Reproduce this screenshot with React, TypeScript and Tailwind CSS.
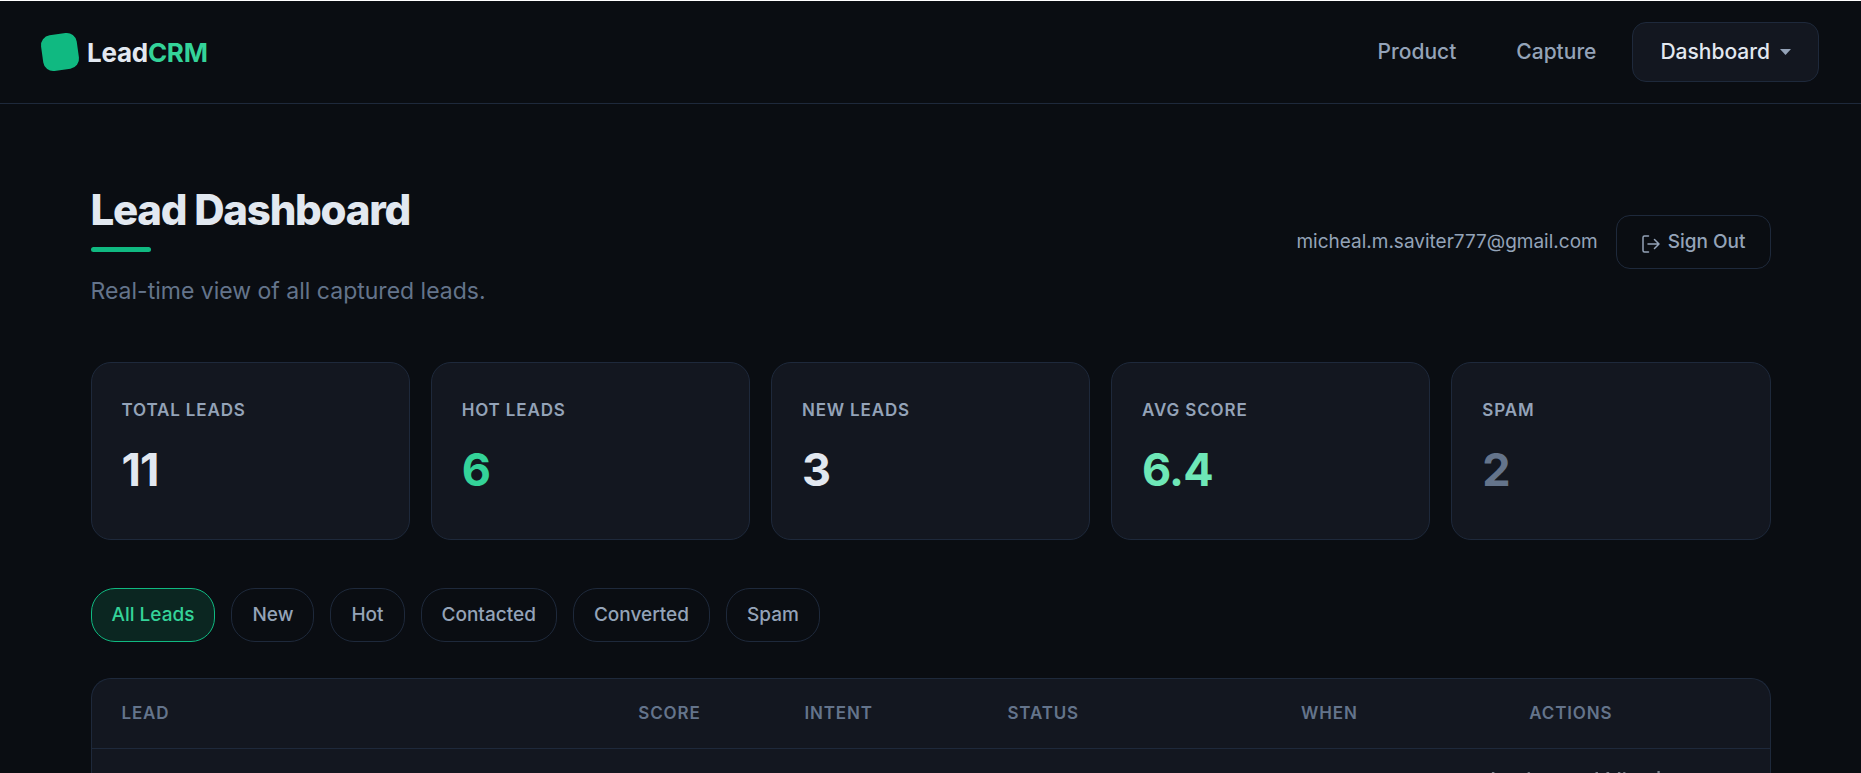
import { useState } from "react";

const STATS = [
  { label: "Total Leads", value: "11", color: "text-[#e2e8f0]" },
  { label: "Hot Leads", value: "6", color: "text-[#34d399]" },
  { label: "New Leads", value: "3", color: "text-[#e2e8f0]" },
  { label: "Avg Score", value: "6.4", color: "text-[#6ee7b7]" },
  { label: "Spam", value: "2", color: "text-[#64748b]" },
];

const FILTERS = ["All Leads", "New", "Hot", "Contacted", "Converted", "Spam"];

const COLUMNS = [
  { label: "Lead", width: "w-[30.8%]" },
  { label: "Score", width: "w-[9.9%]" },
  { label: "Intent", width: "w-[12.1%]" },
  { label: "Status", width: "w-[17.5%]" },
  { label: "When", width: "w-[13.6%]" },
  { label: "Actions", width: "w-[16.1%]" },
];

function SignOutIcon() {
  return (
    <svg className="mt-1 size-[18px]" viewBox="0 0 18 18" fill="none" stroke="currentColor" strokeWidth="1.5" strokeLinecap="round" strokeLinejoin="round" aria-hidden="true">
      <path d="M6.500 1H2.500A1.500 1.500 0 0 0 1 2.500v13A1.500 1.500 0 0 0 2.500 17H6.500" />
      <path d="M6 9h11M12.500 4.500 17 9l-4.500 4.500" />
    </svg>
  );
}

function Header() {
  return (
    <header className="flex items-center justify-between border-t border-b border-t-white border-b-[#1e293b] px-[42px] py-[21px]">
      <a href="#" className="flex items-center gap-[9px] text-[26px] font-bold tracking-[-0.01em] text-[#e2e8f0]">
        <span className="size-9 -rotate-8 rounded-[10px] bg-[#10b981]" />
        <span>
          Lead<span className="text-[#34d399]">CRM</span>
        </span>
      </a>
      <nav className="flex items-center gap-3 text-[21px] font-medium text-[#94a3b8]">
        <a href="#" className="px-6">Product</a>
        <a href="#" className="px-6">Capture</a>
        <button type="button" className="flex h-[60px] items-center gap-2.5 rounded-[14px] border border-[#1e293b] bg-[#131720] px-[27px] text-[#e2e8f0]">
          Dashboard
          <svg className="h-1.5 w-[11px] text-[#94a3b8]" viewBox="0 0 11 6" fill="currentColor" aria-hidden="true">
            <path d="M0 0h11L5.500 6z" />
          </svg>
        </button>
      </nav>
    </header>
  );
}

function PageTitle() {
  return (
    <div className="flex items-center justify-between">
      <div>
        <h1 className="text-[42px] leading-[52px] font-extrabold tracking-[-0.03em] text-[#e2e8f0]">Lead Dashboard</h1>
        <div className="mt-[11px] h-[5px] w-[60px] rounded-full bg-[#10b981]" />
        <p className="mt-[21px] text-[23px] leading-9 text-[#64748b]">Real-time view of all captured leads.</p>
      </div>
      <div className="flex items-center gap-[18px] pb-2.5">
        <span className="text-[19px] leading-7 text-[#94a3b8]">micheal.m.saviter777@gmail.com</span>
        <button type="button" className="flex h-[54px] items-center gap-2 rounded-[14px] border border-[#1e293b] pr-6 pl-[25px] text-[19px] leading-7 font-medium text-[#94a3b8]">
          <SignOutIcon />
          Sign Out
        </button>
      </div>
    </div>
  );
}

function Stats() {
  return (
    <div className="mt-[53px] grid grid-cols-5 gap-[21px]">
      {STATS.map((stat) => (
        <div key={stat.label} className="h-[178px] rounded-[20px] border border-[#1e293b] bg-[#131720] px-[30px] pt-[35px]">
          <p className="text-[17px] leading-6 font-semibold tracking-wider text-[#94a3b8] uppercase">{stat.label}</p>
          <p className={`mt-4 text-[45px] leading-[64px] font-bold tracking-[-0.02em] ${stat.color}`}>{stat.value}</p>
        </div>
      ))}
    </div>
  );
}

function Filters() {
  const [active, setActive] = useState("All Leads");

  return (
    <div className="mt-12 flex flex-wrap gap-4">
      {FILTERS.map((filter) => (
        <button
          key={filter}
          type="button"
          aria-pressed={filter === active}
          onClick={() => setActive(filter)}
          className={`h-[54px] rounded-3xl border px-5 text-[19px] leading-7 font-medium ${
            filter === active
              ? "border-[#10b981] bg-[#0b2621] text-[#34d399]"
              : "border-[#1e293b] text-[#94a3b8]"
          }`}
        >
          {filter}
        </button>
      ))}
    </div>
  );
}

function LeadsTable() {
  return (
    <div className="mt-9 grow rounded-t-[20px] border border-b-0 border-[#1e293b] bg-[#131720]">
      <table className="w-full table-fixed text-left">
        <thead>
          <tr className="h-[69px] border-b border-[#1e293b]">
            {COLUMNS.map((column) => (
              <th key={column.label} className={`${column.width} px-[30px] text-[17px] font-semibold tracking-wider text-[#64748b] uppercase`}>
                {column.label}
              </th>
            ))}
          </tr>
        </thead>
      </table>
    </div>
  );
}

export default function App() {
  return (
    <div className="flex h-screen flex-col overflow-hidden bg-[#0a0d12] font-['Inter',sans-serif]">
      <Header />
      <main className="mx-auto flex w-full max-w-[1680px] grow flex-col pt-20">
        <PageTitle />
        <Stats />
        <Filters />
        <LeadsTable />
      </main>
      {/* system notice running off the bottom edge */}
      <p className="pointer-events-none fixed right-[147px] -bottom-[26px] font-['Open_Sans',sans-serif] text-[28px] leading-9 text-[#7d858f]">
        Activate Windows
      </p>
    </div>
  );
}
